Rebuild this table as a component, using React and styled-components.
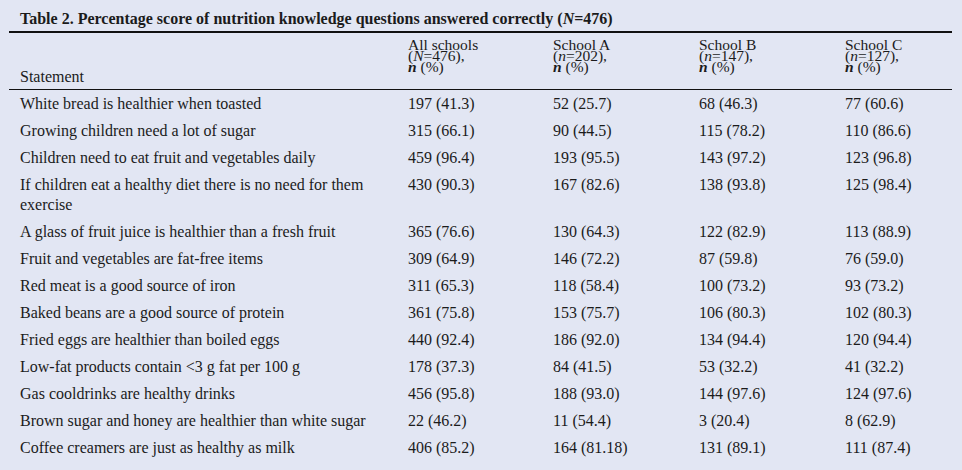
import styled, { createGlobalStyle } from 'styled-components';

const GlobalStyle = createGlobalStyle`
  body {
    margin: 0;
    background: #e2e6f3;
    font-family: "Liberation Serif", "Times New Roman", serif;
    color: #1b1b1b;
  }
`;

const rows = [
  ['White bread is healthier when toasted', '197 (41.3)', '52 (25.7)', '68 (46.3)', '77 (60.6)'],
  ['Growing children need a lot of sugar', '315 (66.1)', '90 (44.5)', '115 (78.2)', '110 (86.6)'],
  ['Children need to eat fruit and vegetables daily', '459 (96.4)', '193 (95.5)', '143 (97.2)', '123 (96.8)'],
  ['If children eat a healthy diet there is no need for them exercise', '430 (90.3)', '167 (82.6)', '138 (93.8)', '125 (98.4)'],
  ['A glass of fruit juice is healthier than a fresh fruit', '365 (76.6)', '130 (64.3)', '122 (82.9)', '113 (88.9)'],
  ['Fruit and vegetables are fat-free items', '309 (64.9)', '146 (72.2)', '87 (59.8)', '76 (59.0)'],
  ['Red meat is a good source of iron', '311 (65.3)', '118 (58.4)', '100 (73.2)', '93 (73.2)'],
  ['Baked beans are a good source of protein', '361 (75.8)', '153 (75.7)', '106 (80.3)', '102 (80.3)'],
  ['Fried eggs are healthier than boiled eggs', '440 (92.4)', '186 (92.0)', '134 (94.4)', '120 (94.4)'],
  ['Low-fat products contain <3 g fat per 100 g', '178 (37.3)', '84 (41.5)', '53 (32.2)', '41 (32.2)'],
  ['Gas cooldrinks are healthy drinks', '456 (95.8)', '188 (93.0)', '144 (97.6)', '124 (97.6)'],
  ['Brown sugar and honey are healthier than white sugar', '22 (46.2)', '11 (54.4)', '3 (20.4)', '8 (62.9)'],
  ['Coffee creamers are just as healthy as milk', '406 (85.2)', '164 (81.18)', '131 (89.1)', '111 (87.4)'],
];

const groups = [
  { name: 'All schools', sym: 'N', count: 476 },
  { name: 'School A', sym: 'n', count: 202 },
  { name: 'School B', sym: 'n', count: 147 },
  { name: 'School C', sym: 'n', count: 127 },
];

function App() {
  return (
    <Wrapper>
      <GlobalStyle />
      <Caption>
        Table 2. Percentage score of nutrition knowledge questions answered correctly (<I>N</I>=476)
      </Caption>
      <Table>
        <HeadRow>
          <StatementHead>Statement</StatementHead>
          {groups.map(g => (
            <HeadCell key={g.name}>
              <HeadLine>{g.name}</HeadLine>
              <HeadLine>
                (<I>{g.sym}</I>={g.count}),
              </HeadLine>
              <HeadLine>
                <BI>n</BI> (%)
              </HeadLine>
            </HeadCell>
          ))}
        </HeadRow>
        {rows.map(r => (
          <Row key={r[0]}>
            <Statement>{r[0]}</Statement>
            {r.slice(1).map((v, i) => (
              <Cell key={i}>{v}</Cell>
            ))}
          </Row>
        ))}
      </Table>
    </Wrapper>
  );
}

export default App;

const Wrapper = styled.div`
  width: 943px;
  margin-left: 9px;
`;

const Caption = styled.div`
  padding: 9px 0 0 11px;
  font-size: 16px;
  line-height: 19px;
  font-weight: bold;
  margin-bottom: 3px;
`;

const I = styled.i``;

const BI = styled.b`
  font-style: italic;
`;

const Table = styled.div`
  border-top: 2px solid #111;
`;

const cols = `399px 145px 146px 146px 1fr`;

const HeadRow = styled.div`
  display: grid;
  grid-template-columns: ${cols};
  height: 56px;
  border-bottom: 1px solid #111;
  font-size: 16px;
`;

const HeadCell = styled.div`
  padding-top: 6px;
  font-size: 15.5px;
`;

const HeadLine = styled.div`
  height: 11px;
  line-height: 11px;
  white-space: nowrap;
`;

const StatementHead = styled.div`
  align-self: end;
  padding: 0 0 3px 11px;
  line-height: 19px;
`;

const Row = styled.div`
  display: grid;
  grid-template-columns: ${cols};
  font-size: 16px;
  line-height: 20px;
  padding: 4px 0 3px;
`;

const Statement = styled.div`
  padding: 0 10px 0 11px;
`;

const Cell = styled.div``;
